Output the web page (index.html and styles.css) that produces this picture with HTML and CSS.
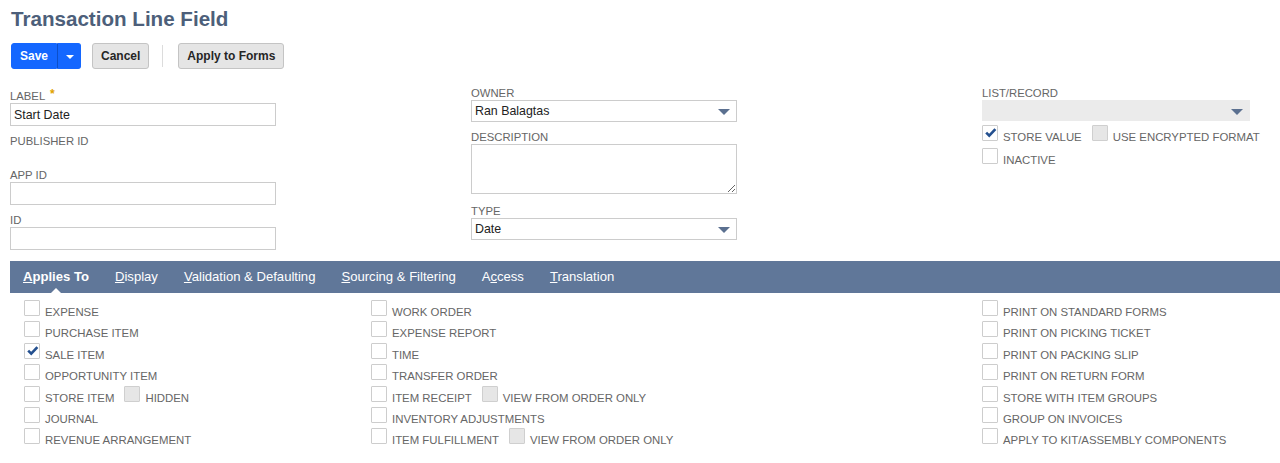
FILE: index.html
```html
<!DOCTYPE html>
<html lang="en">
<head>
  <meta charset="UTF-8">
  <title>Transaction Line Field</title>
  <link rel="stylesheet" href="styles.css">
</head>
<body>

<h1 class="page-title">Transaction Line Field</h1>

<div class="toolbar">
  <div class="split">
    <button class="btn primary">Save</button>
    <button class="btn primary more"><span class="caret-white"></span></button>
  </div>
  <button class="btn">Cancel</button>
  <span class="toolbar-sep"></span>
  <button class="btn">Apply to Forms</button>
</div>

<div class="fields">
  <div class="col col-1">
    <div class="field">
      <label class="flabel">LABEL <span class="req">*</span></label>
      <input class="text" type="text" value="Start Date">
    </div>
    <div class="field gap">
      <label class="flabel">PUBLISHER ID</label>
      <div class="empty-value"></div>
    </div>
    <div class="field">
      <label class="flabel">APP ID</label>
      <input class="text" type="text">
    </div>
    <div class="field gap">
      <label class="flabel">ID</label>
      <input class="text" type="text">
    </div>
  </div>

  <div class="col col-2">
    <div class="field">
      <label class="flabel">OWNER</label>
      <div class="select"><span>Ran Balagtas</span><i class="arrow"></i></div>
    </div>
    <div class="field gap">
      <label class="flabel">DESCRIPTION</label>
      <textarea class="area"></textarea>
    </div>
    <div class="field gap-lg">
      <label class="flabel">TYPE</label>
      <div class="select"><span>Date</span><i class="arrow"></i></div>
    </div>
  </div>

  <div class="col col-3">
    <div class="field">
      <label class="flabel">LIST/RECORD</label>
      <div class="select disabled"><span></span><i class="arrow"></i></div>
    </div>
    <div class="opts">
      <div class="chk-row">
        <span class="box checked"><svg viewBox="0 0 16 16"><path d="M2.5 7.5 L6 11 L13 3.5"/></svg></span>
        <span class="chk-label">STORE VALUE</span>
        <span class="box off second"></span>
        <span class="chk-label">USE ENCRYPTED FORMAT</span>
      </div>
      <div class="chk-row">
        <span class="box"></span>
        <span class="chk-label">INACTIVE</span>
      </div>
    </div>
  </div>
</div>

<div class="tabs">
  <div class="tab active"><u>A</u>pplies To<i class="pointer"></i></div>
  <div class="tab"><u>D</u>isplay</div>
  <div class="tab"><u>V</u>alidation &amp; Defaulting</div>
  <div class="tab"><u>S</u>ourcing &amp; Filtering</div>
  <div class="tab">A<u>c</u>cess</div>
  <div class="tab"><u>T</u>ranslation</div>
</div>

<div class="applies">
  <div class="list">
    <div class="row"><span class="box"></span><span class="chk-label">EXPENSE</span></div>
    <div class="row"><span class="box"></span><span class="chk-label">PURCHASE ITEM</span></div>
    <div class="row"><span class="box checked"><svg viewBox="0 0 16 16"><path d="M2.5 7.5 L6 11 L13 3.5"/></svg></span><span class="chk-label">SALE ITEM</span></div>
    <div class="row"><span class="box"></span><span class="chk-label">OPPORTUNITY ITEM</span></div>
    <div class="row"><span class="box"></span><span class="chk-label">STORE ITEM</span><span class="box off second"></span><span class="chk-label">HIDDEN</span></div>
    <div class="row"><span class="box"></span><span class="chk-label">JOURNAL</span></div>
    <div class="row"><span class="box"></span><span class="chk-label">REVENUE ARRANGEMENT</span></div>
  </div>
  <div class="list">
    <div class="row"><span class="box"></span><span class="chk-label">WORK ORDER</span></div>
    <div class="row"><span class="box"></span><span class="chk-label">EXPENSE REPORT</span></div>
    <div class="row"><span class="box"></span><span class="chk-label">TIME</span></div>
    <div class="row"><span class="box"></span><span class="chk-label">TRANSFER ORDER</span></div>
    <div class="row"><span class="box"></span><span class="chk-label">ITEM RECEIPT</span><span class="box off second"></span><span class="chk-label">VIEW FROM ORDER ONLY</span></div>
    <div class="row"><span class="box"></span><span class="chk-label">INVENTORY ADJUSTMENTS</span></div>
    <div class="row"><span class="box"></span><span class="chk-label">ITEM FULFILLMENT</span><span class="box off second"></span><span class="chk-label">VIEW FROM ORDER ONLY</span></div>
  </div>
  <div class="list">
    <div class="row"><span class="box"></span><span class="chk-label">PRINT ON STANDARD FORMS</span></div>
    <div class="row"><span class="box"></span><span class="chk-label">PRINT ON PICKING TICKET</span></div>
    <div class="row"><span class="box"></span><span class="chk-label">PRINT ON PACKING SLIP</span></div>
    <div class="row"><span class="box"></span><span class="chk-label">PRINT ON RETURN FORM</span></div>
    <div class="row"><span class="box"></span><span class="chk-label">STORE WITH ITEM GROUPS</span></div>
    <div class="row"><span class="box"></span><span class="chk-label">GROUP ON INVOICES</span></div>
    <div class="row"><span class="box"></span><span class="chk-label">APPLY TO KIT/ASSEMBLY COMPONENTS</span></div>
  </div>
</div>

</body>
</html>
```

FILE: styles.css
```css
body {
  margin: 0;
  font-family: "Liberation Sans", Arial, sans-serif;
  background: white;
  color: #222;
}
.page-title {
  margin: 0;
  padding: 7px 0 0 11px;
  font-size: 20.6px;
  line-height: 23px;
  font-weight: bold;
  color: #4d5f7a;
}
.toolbar {
  display: flex;
  align-items: center;
  margin: 13px 0 0 11px;
  height: 26px;
}
.btn {
  height: 26px;
  padding: 0 8px;
  font-family: inherit;
  font-size: 12px;
  font-weight: bold;
  color: #262626;
  background: #e5e5e5;
  border: 1px solid #c4c4c4;
  border-radius: 3px;
  margin-right: 11px;
}
.split {
  display: flex;
  margin-right: 11px;
}
.split .btn {
  margin-right: 0;
}
.btn.primary {
  background: #1467ff;
  border-color: #1467ff;
  color: white;
  border-radius: 3px 0 0 3px;
  width: 46px;
}
.btn.primary.more {
  width: 24px;
  border-radius: 0 3px 3px 0;
  border-left: 1px solid #0c4fc9;
}
.caret-white {
  display: block;
  margin: 2px auto 0;
  width: 0;
  height: 0;
  border-left: 4px solid transparent;
  border-right: 4px solid transparent;
  border-top: 4px solid white;
}
.toolbar-sep {
  width: 1px;
  height: 22px;
  background: #dcdcdc;
  margin: 0 15px 0 2px;
}

.fields {
  display: grid;
  grid-template-columns: 461px 511px 1fr;
  padding-left: 10px;
  margin-top: 17px;
  height: 164px;
}
.col-1 {
  padding-top: 3px;
}
.field {
  display: flex;
  flex-direction: column;
  width: 266px;
}
.field.gap {
  margin-top: 8px;
}
.field.gap-lg {
  margin-top: 10px;
}
.flabel {
  font-size: 11.3px;
  line-height: 14px;
  color: #666;
}
.req {
  color: #e0a100;
  font-weight: bold;
  font-size: 12px;
  margin-left: 2px;
  vertical-align: top;
  line-height: 10px;
}
.empty-value {
  height: 20px;
}
.text {
  box-sizing: border-box;
  height: 23px;
  width: 266px;
  margin: 0;
  padding: 0 3px;
  border: 1px solid #ccc;
  font-family: inherit;
  font-size: 12.4px;
  color: #222;
  outline: none;
}
.area {
  box-sizing: border-box;
  height: 50px;
  width: 266px;
  margin: 0;
  border: 1px solid #ccc;
  font-family: inherit;
  font-size: 12.4px;
}
.select {
  box-sizing: border-box;
  height: 22px;
  display: flex;
  align-items: center;
  justify-content: space-between;
  padding: 0 6px 0 3px;
  border: 1px solid #ccc;
  font-size: 12.4px;
  color: #222;
}
.select.disabled {
  background: #ebebeb;
  border-color: #ebebeb;
  height: 21px;
  width: 268px;
}
.arrow {
  width: 0;
  height: 0;
  border-left: 6px solid transparent;
  border-right: 6px solid transparent;
  border-top: 6px solid #5b7090;
  margin-top: 2px;
}

.opts {
  margin-top: 4px;
}
.chk-row {
  display: flex;
  align-items: baseline;
  height: 22.7px;
}
.box {
  box-sizing: border-box;
  width: 16px;
  height: 16px;
  border: 1px solid #cdcdcd;
  border-radius: 1px;
  background: white;
  margin-right: 5px;
  flex: none;
  position: relative;
}
.box.off {
  background: #e6e6e6;
  border-color: #cfcfcf;
}
.box.second {
  margin-left: 10px;
}
.box svg {
  position: absolute;
  left: 1px;
  top: 0;
  width: 14px;
  height: 14px;
}
.box svg path {
  fill: none;
  stroke: #24508f;
  stroke-width: 3;
}
.chk-label {
  font-size: 11.4px;
  line-height: 14px;
  color: #666;
  white-space: nowrap;
}

.tabs {
  display: flex;
  margin: 11px 0 0 10px;
  height: 32px;
  background: #607799;
}
.tab {
  position: relative;
  padding: 0 13px;
  line-height: 32px;
  font-size: 13.1px;
  color: white;
}
.tab.active {
  font-weight: bold;
}
.pointer {
  position: absolute;
  left: 50%;
  bottom: 0;
  margin-left: -5px;
  width: 0;
  height: 0;
  border-left: 5px solid transparent;
  border-right: 5px solid transparent;
  border-bottom: 5px solid white;
}

.applies {
  display: grid;
  grid-template-columns: 347px 611px 1fr;
  padding: 7px 0 0 24px;
}
.row {
  display: flex;
  align-items: baseline;
  height: 21.4px;
}
```
